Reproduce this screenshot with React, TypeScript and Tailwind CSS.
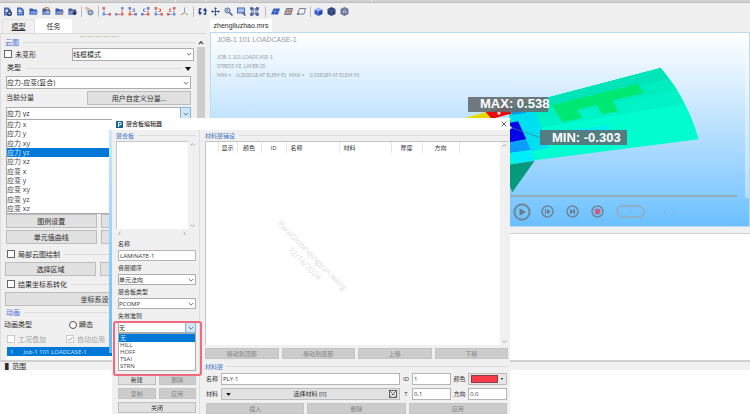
import React from "react";

const sans = "font-['Open_Sans','Noto_Sans_CJK_SC',sans-serif]";

function Chevron({ className = "" }: { className?: string }) {
  return (
    <svg viewBox="0 0 8 8" className={"pointer-events-none h-2 w-2 " + className} fill="none" stroke="#777" strokeWidth="1">
      <path d="M1.8 3 4 5.2 6.2 3" />
    </svg>
  );
}

function Select({ label, value, open = false, className = "" }: { label: string; value: string; open?: boolean; className?: string }) {
  return (
    <div className={"grid items-center border border-[#adadad] bg-white " + className}>
      <select aria-label={label} defaultValue={value} className="col-start-1 row-start-1 h-full w-full appearance-none bg-transparent leading-none outline-none">
        <option>{value}</option>
      </select>
      <span
        className={
          "pointer-events-none col-start-1 row-start-1 flex h-full w-[9px] items-center justify-center justify-self-end " +
          (open ? "bg-[#cfe6f8] outline outline-[#7fb4dc]" : "")
        }
      >
        <Chevron />
      </span>
    </div>
  );
}

function Button({ children, label, className = "" }: { children?: React.ReactNode; label?: string; className?: string }) {
  return (
    <button type="button" aria-label={label} className={"flex items-center justify-center whitespace-nowrap border border-[#bdbdbd] bg-[#e1e1e1] leading-none " + className}>
      {children}
    </button>
  );
}

function DialogButton({ children, disabled = false, className = "" }: { children: React.ReactNode; disabled?: boolean; className?: string }) {
  return (
    <button
      type="button"
      disabled={disabled}
      className={
        "flex flex-1 items-center justify-center whitespace-nowrap border leading-none " +
        (disabled ? "border-[#c4c4c4] bg-[#cccccc] text-[#868686] " : "border-[#bebebe] bg-[#e1e1e1] ") +
        className
      }
    >
      {children}
    </button>
  );
}

function Legend({ children, className = "" }: { children: React.ReactNode; className?: string }) {
  return (
    <div className={"flex items-center gap-1 whitespace-nowrap leading-none " + className}>
      {children}
      <span className="h-px flex-1 bg-[#dcdcdc]" />
    </div>
  );
}

function Check({ label, checked = false, muted = false }: { label: string; checked?: boolean; muted?: boolean }) {
  return (
    <label className={"flex items-center gap-[3px] whitespace-nowrap leading-none " + (muted ? "text-[#a3a3a3]" : "")}>
      <span className="grid h-[8px] w-[8px] place-items-center">
        <input
          type="checkbox"
          defaultChecked={checked}
          disabled={muted}
          className={"col-start-1 row-start-1 h-[8px] w-[8px] appearance-none border bg-white " + (muted ? "border-[#cccccc]" : "border-[#666666]")}
        />
        {checked && (
          <svg viewBox="0 0 8 8" className="col-start-1 row-start-1 h-[8px] w-[8px]" fill="none" stroke="#9a9a9a">
            <path d="m2 4 1.5 1.6L6.3 2.4" />
          </svg>
        )}
      </span>
      {label}
    </label>
  );
}

/* ---------- toolbar ---------- */

function Tool({ name, children }: { name: string; children: React.ReactNode }) {
  return (
    <button type="button" aria-label={name} className="flex w-[13px] items-center justify-center">
      <svg viewBox="0 0 18 18" className="h-[9px] w-[9px]" fill="none">
        {children}
      </svg>
    </button>
  );
}

const Sep = ({ className = "w-1" }: { className?: string }) => (
  <span className={"flex justify-center " + className}>
    <span className="h-[11px] w-px bg-[#bcbcbc]" />
  </span>
);

const Doc = () => (
  <>
    <path d="M2 1h9l5 5v11H2z" fill="#4668b8" />
    <path d="M5 5h5v3h3v2H5z" fill="#dbe6fa" />
    <path d="M5 12h7v2H5z" fill="#a9bfe8" />
  </>
);
const Folder = () => (
  <>
    <path d="M1 3h6l2 2h7v11H1z" fill="#3558ab" />
    <path d="M4 8h14l-3 8H1z" fill="#6f92dc" />
  </>
);

function Axes({ a, b, flip = false, up = false }: { a: string; b: string; flip?: boolean; up?: boolean }) {
  return (
    <g transform={flip ? "translate(18 0) scale(-1 1)" : undefined}>
      <path d="M4 3v12h11" stroke={a} strokeWidth="2" strokeDasharray="4 1" />
      <rect x="1" y="0" width="5" height="5" fill={b} />
      <rect x="1" y="12" width="5" height="5" fill={a} />
      <rect x="13" y="12" width="5" height="5" fill={b} />
      {up && <path d="M9 4h4v5H9" stroke={b} strokeWidth="2" />}
    </g>
  );
}

function Cube({ top, left, right }: { top: string; left: string; right: string }) {
  return (
    <>
      <path d="m9 1 8 4-8 4-8-4z" fill={top} />
      <path d="m1 5 8 4v9l-8-4z" fill={left} />
      <path d="m17 5-8 4v9l8-4z" fill={right} />
    </>
  );
}

function Toolbar() {
  return (
    <header className="flex h-[16px] shrink-0 items-center pl-px" role="toolbar">
      <Tool name="新建"><Doc /><circle cx="13" cy="13" r="5" fill="#26375f" /><path d="M13 10v6M10 13h6" stroke="#fff" /></Tool>
      <Tool name="文档"><Doc /><path d="m6 10 3 3 6-7" stroke="#6f92dc" strokeWidth="2" /></Tool>
      <Tool name="打开"><Folder /></Tool>
      <Tool name="导入"><Folder /><path d="M5 4c2-4 8-4 9 1" stroke="#d28a4c" strokeWidth="3" /><circle cx="11" cy="10" r="3" fill="#dfb18c" /></Tool>
      <Tool name="导出"><Folder /><path d="M11 8v8M8 13l3 3 3-3" stroke="#d28a4c" strokeWidth="2" /></Tool>
      <Tool name="保存"><Folder /><circle cx="13" cy="12" r="4" fill="#26375f" /><path d="M5 9h6" stroke="#d28a4c" strokeWidth="3" /></Tool>
      <Sep />
      <Tool name="设置"><circle cx="11" cy="11" r="6" fill="#8392ac" /><circle cx="11" cy="11" r="2" fill="#dce2ee" /><path d="m1 1 8 3" stroke="#e0a069" strokeWidth="3" /><path d="M2 5 6 9" stroke="#6f92dc" strokeWidth="2" /></Tool>
      <Sep />
      <Tool name="视图1"><Axes a="#6b8fe0" b="#e2664f" /></Tool>
      <Tool name="视图2"><Axes a="#e2664f" b="#6b8fe0" flip /></Tool>
      <Tool name="视图3"><Axes a="#e2664f" b="#5c82d8" up /></Tool>
      <Tool name="视图4"><Axes a="#e2664f" b="#5c82d8" flip up /></Tool>
      <Tool name="视图5"><Axes a="#6b8fe0" b="#e2664f" up /></Tool>
      <Tool name="视图6"><Axes a="#6b8fe0" b="#e2664f" flip up /></Tool>
      <Tool name="轴测"><path d="M9 1v10" stroke="#7d9ce0" strokeWidth="2" /><path d="m9 11-7 5" stroke="#e2664f" strokeWidth="2" /><path d="m9 11 7 5" stroke="#6fb98c" strokeWidth="2" /></Tool>
      <Sep className="w-[5px]" />
      <Tool name="旋转"><path d="M7 4H3v9M11 14h4V5" stroke="#2c4584" strokeWidth="3" /><path d="M0 10h8l-4 7zM10 8h8l-4-7z" fill="#2c4584" /></Tool>
      <Tool name="平移"><path d="M9 2v14M2 9h14" stroke="#3f5690" strokeWidth="2" /><path d="m9 0 3 4H6zM9 18l3-4H6zM0 9l4-3v6zM18 9l-4-3v6z" fill="#3f5690" /></Tool>
      <Tool name="缩放"><circle cx="7" cy="7" r="5" stroke="#3f5690" strokeWidth="2" /><path d="m11 11 6 6" stroke="#3f5690" strokeWidth="3" /><path d="M4 7h6M7 4v6" stroke="#3f5690" /></Tool>
      <Tool name="框选缩放"><rect x="1" y="2" width="14" height="10" fill="#a9bfe8" stroke="#4668b8" strokeWidth="2" /><path d="m11 11 6 6" stroke="#3f5690" strokeWidth="3" /></Tool>
      <Tool name="适应窗口"><rect x="2" y="2" width="14" height="14" fill="#7c8fb8" /><path d="M2 6V2h4M12 2h4v4M16 12v4h-4M6 16H2v-4" stroke="#3f5690" strokeWidth="3" /><path d="M9 3v12M3 9h12" stroke="#c9d2e6" strokeWidth="2" /></Tool>
      <Sep className="w-[8px]" />
      <Tool name="着色"><path d="M5 3h13l-4 12H0z" fill="#3558c8" /><path d="M5 9h10M9 4 6 15" stroke="#8fa8ea" /></Tool>
      <Tool name="网格"><path d="M5 3h12l-3 12H1z" fill="#d9a58c" stroke="#6b7596" strokeWidth="2" /><path d="M3 9h13M11 3 8 15" stroke="#6b7596" /></Tool>
      <Tool name="线框"><path d="M5 3h12l-3 11H1z" stroke="#77809a" strokeWidth="2" /><circle cx="2" cy="14" r="2" fill="#55617f" /></Tool>
      <Sep />
      <Tool name="实体"><Cube top="#9db8fa" left="#3e63d8" right="#2446ac" /></Tool>
      <Tool name="实体网格"><path d="m9 0 8 4v10l-8 4-8-4V4z" fill="#2f437a" /><path d="m3 5 6 3 6-3M9 8v8" stroke="#6f86be" /></Tool>
      <Tool name="体线框"><path d="m9 0 8 4v10l-8 4-8-4V4z" fill="#6a779a" /><circle cx="9" cy="9" r="4" fill="#b3bccf" /><path d="m3 5 6 3 6-3M9 8v8" stroke="#55617f" /></Tool>
    </header>
  );
}

/* ---------- left panel ---------- */

const components = ["应力 x", "应力 y", "应力 xy", "应力 yz", "应力 xz", "应变 x", "应变 y", "应变 xy", "应变 yz", "应变 xz"];

function TaskPanel() {
  return (
    <aside className="flex w-[210px] shrink-0 flex-col pr-[5px] text-[7px]">
      <nav className="flex h-[14px] shrink-0 pl-[2px]">
        <button type="button" className="w-[33px] border-x border-t border-[#e2e2e2] leading-none underline">模型</button>
        <button type="button" className="w-[37px] bg-white leading-none">任务</button>
      </nav>
      <div className="flex border-t border-[#d9d9d9]">
        <div className="flex min-w-0 flex-1 flex-col border-l border-[#dedede] pl-px">
          <div className="flex h-[4px] items-center justify-center">
            <span className="w-[39px] border-t border-dotted border-[#b5b59a]" />
          </div>
          <Legend className="h-[9px] pl-[3px] text-[#4169d8]">云图</Legend>
          <div className="flex h-[14px] items-center justify-between pl-[2px] pr-[2px]">
            <Check label="未变形" />
            <Select label="显示模式" value="线框模式" className="h-[13px] w-[122px]" />
          </div>
          <div className="flex h-[15px] items-center gap-1 pl-[5px] pr-[5px]">
            类型<span className="h-px flex-1 bg-[#dcdcdc]" />
            <svg viewBox="0 0 6 4" className="h-[4px] w-[6px]"><path d="M0 0h6L3 4z" fill="#111" /></svg>
          </div>
          <div className="flex flex-col gap-[2px] pl-[4px] pr-[5px]">
            <Select label="类型" value="应力-应变(复合)" className="h-[13px]" />
            <div className="flex h-[14px] items-center justify-between">
              <span>当前分量</span>
              <Button className="h-[14px] w-[104px]">用户自定义分量...</Button>
            </div>
            <Select label="当前分量" value="应力 yz" open className="h-[13px]" />
          </div>
          <ul role="listbox" aria-label="分量" className="ml-[4px] mr-[5px] grid h-[94px] auto-rows-fr border border-t-0 border-[#aaaaaa] bg-white leading-none text-[#444]">
            {components.map((c) => (
              <li
                key={c}
                role="option"
                aria-selected={c === "应力 yz"}
                className={"flex items-center " + (c === "应力 yz" ? "bg-[#0078d7] text-[#cfe6fa]" : "")}
              >
                {c}
              </li>
            ))}
          </ul>
          <div className="grid grid-cols-2 gap-x-1 gap-y-[2px] pb-[3px] pl-[4px] pr-[5px]">
            <Button className="h-[14px]">图例设置</Button>
            <Button className="h-[14px]" label="显示设置" />
            <Button className="h-[14px]">单元值曲线</Button>
            <Button className="h-[14px]" label="节点值曲线" />
          </div>
          <Legend className="h-[14px] pl-[5px]"><Check label="局部云图绘制" /></Legend>
          <div className="grid grid-cols-2 gap-x-1 pl-[3px] pr-[5px] pt-px">
            <Button className="h-[14px]">选择区域</Button>
            <Button className="h-[14px]" label="清除区域" />
          </div>
          <Legend className="h-[16px] pl-[5px]"><Check label="结果坐标系转化" /></Legend>
          <Button className="ml-[3px] mr-[5px] h-[14px]">坐标系设置</Button>
          <Legend className="h-[12px] pl-[4px] text-[#4169d8]">动画</Legend>
          <div className="flex h-[13px] items-center pl-[2px] leading-none">
            <span className="w-[65px]">动画类型</span>
            <label className="flex items-center gap-[2px]">
              <input type="radio" name="anim" className="h-[8px] w-[8px] appearance-none rounded-full border border-[#555555] bg-white" />
              瞬态
            </label>
          </div>
          <div className="flex h-[16px] items-center gap-[20px] pl-[5px]">
            <Check label="工况叠加" muted />
            <Check label="自动应用" checked muted />
          </div>
          <ul className="ml-[5px] mr-[5px] h-[13px] bg-white">
            <li className="flex h-[9px] items-center gap-[10px] bg-[#0078d7] pl-[3px] text-[6px] leading-none text-[#cfe6fa]">
              <span>1</span><span>Job-1 101 LOADCASE-1</span>
            </li>
          </ul>
        </div>
        <div className="flex w-[9px] shrink-0 flex-col items-center bg-[#f0f0f0]">
          <svg viewBox="0 0 8 8" className="mt-[4px] h-[9px] w-[8px]" fill="none" stroke="#555"><path d="M2 5.5 4 3.2 6 5.5" strokeWidth="1.4" /></svg>
          <span className="h-[180px] w-[8px] bg-[#cdcdcd]" />
        </div>
      </div>
    </aside>
  );
}

/* ---------- result viewport ---------- */

function Wing() {
  return (
    <svg viewBox="0 6 900 585" className="absolute left-[238px] top-0 h-[195px] w-[300px]">
      <path d="M180 230 635 111Q716 206 749 325L257 388 180 400Z" fill="#00fccf" />
      <path d="M200 225 635 111Q680 165 706 218L275 290Z" fill="#00f2c6" />
      <path d="M200 225 635 111 685 177 275 262Z" fill="#00edc0" />
      <path d="M200 225 635 111 660 143 310 222 262 240Z" fill="#00e4b7" />
      <path d="M308 222 567 159 585 187 490 208 508 240 460 250 442 222 384 236 400 261 340 273Z" fill="#00e871" />
      <path d="M180 248 256 238 300 352 245 360Z" fill="#00dff2" />
      <path d="M360 296 480 284V298L360 312Z" fill="#00edf2" />
      <path d="M182 232 222 226 232 246 190 251Z" fill="#079be8" />
      <path d="M30 266 112 243 130 264V270H30Z" fill="#e6d900" />
      <path d="M110 243 176 226 188 248 128 264Z" fill="#e80b0b" />
      <path d="M178 260 192 273 178 275Z" fill="#00dca9" />
      <path d="M178 276 207 271 232 325 178 335Z" fill="#0505ea" />
      <path d="M178 336 232 326 245 357 178 367Z" fill="#0b9dfb" />
      <path d="M182 367 245 357 257 388 194 398Z" fill="#00eefc" />
      <path d="M178 367 186 366 196 398 178 400Z" fill="#00f7cb" />
      <path d="M178 401 257 389 190 484 178 455Z" fill="#059a7c" />
      <path d="M185 289 275 320" stroke="#4f7890" strokeWidth="2" />
      <circle cx="150" cy="246" r="5" fill="#f3dede" />
      <circle cx="183" cy="290" r="5" fill="#dcdce8" />
    </svg>
  );
}

function PlayerButton({ name, children, className = "h-[13px] w-[13px]" }: { name: string; children: React.ReactNode; className?: string }) {
  return (
    <button type="button" aria-label={name} className={className}>
      <svg viewBox="0 0 26 26" className="h-full w-full" fill="none">
        <circle cx="13" cy="13" r="11" stroke="#6f8797" strokeWidth="3" />
        {children}
      </svg>
    </button>
  );
}

function Viewport() {
  return (
    <section className="relative flex h-[195px] flex-col border border-[#b9d9f7] bg-linear-to-b from-white via-[#b9e0fe] to-[#69c0ff] pl-[6px] font-['Lato',sans-serif] text-[#979b9e]">
      <p className="pt-px font-['Liberation_Sans',sans-serif] text-[7px] leading-[11px]">JOB-1 101 LOADCASE-1</p>
      <div className="whitespace-pre pt-[8px] text-[5px] leading-[9px]">
        <p>JOB-1 101 LOADCASE-1</p>
        <p>STRESS YZ, LAYER (3)</p>
        <p>{"MIN =   -0.303018 AT ELEM 91  MAX =    0.538189 AT ELEM 95"}</p>
      </div>
      <Wing />
      <span className="absolute left-[257px] top-[64px] h-[15px] w-[80px] whitespace-nowrap bg-[#646c70]/90 pl-[12px] font-['Liberation_Sans',sans-serif] text-[13px] font-bold leading-[14px] text-white">MAX: 0.538</span>
      <span className="absolute left-[329px] top-[97px] h-[15px] w-[87px] whitespace-nowrap bg-[#5c7078]/90 pl-[12px] font-['Liberation_Sans',sans-serif] text-[13px] font-bold leading-[15px] text-white">MIN: -0.303</span>
      <span className="absolute right-0 top-[14px] h-[151px] w-[4px] bg-white/40" />
      <div className="mt-auto pr-[12px]">
        <div className="h-[2px] bg-[#94acba]" />
        <div className="flex h-[29px] items-center gap-[12px] pl-[296px]">
          <PlayerButton name="播放" className="-mr-[2px] h-[18px] w-[18px]"><path d="M9.500 7.500v11l9-5.500z" fill="#6f7880" /></PlayerButton>
          <PlayerButton name="下一帧"><path d="M8 8h2v10H8zM12 7.500v11l7-5.500z" fill="#6f7880" /></PlayerButton>
          <PlayerButton name="末帧"><path d="M8 7.500v11l7-5.500zM15 8h3v10h-3z" fill="#6f7880" /></PlayerButton>
          <PlayerButton name="录制"><circle cx="13" cy="13" r="6" fill="#cf5c86" /></PlayerButton>
          <button type="button" className="h-[13px] w-[29px] rounded-full border-2 border-[#8fb0c8] text-[5px] leading-none text-[#8fb0c8]">x1</button>
          <span className="pl-[6px] text-[6px] text-[#8fb0c8]">1 / 1</span>
        </div>
      </div>
    </section>
  );
}

/* ---------- laminate editor ---------- */

const headers: [string, string][] = [
  ["", "w-[12px]"],
  ["显示", "w-[19px] text-center"],
  ["颜色", "w-[24px] text-center"],
  ["ID", "w-[25px] text-center"],
  ["名称", "w-[53px] pl-[4px] text-left"],
  ["材料", "w-[52px] pl-[4px] text-left"],
  ["厚度", "w-[31px] text-center"],
  ["方向", "w-[37px] text-center"],
];

const field = "h-[12px] min-w-0 border border-[#b4b4b4] bg-white px-px leading-none outline-none";

function ScrollArrow({ d }: { d: string }) {
  return (
    <svg viewBox="0 0 8 8" className="h-[7px] w-[7px]" fill="none" stroke="#9a9a9a"><path d={d} /></svg>
  );
}

function LaminateColumn() {
  return (
    <div className="flex w-[88px] shrink-0 flex-col border-r border-[#dedede] pl-[4px] pr-[3px]">
      <Legend className="h-[11px] text-[#3f74c8]">层合板</Legend>
      <div className="grid grid-cols-[1fr_8px] grid-rows-[88px_8px]">
        <div className="border-l border-t border-[#c9c9c9] bg-white" />
        <div className="flex flex-col items-center justify-between">
          <ScrollArrow d="M2 5 4 3l2 2" /><ScrollArrow d="m2 3 2 2 2-2" />
        </div>
        <div className="flex items-center justify-between">
          <ScrollArrow d="M5 2 3 4l2 2" /><ScrollArrow d="m3 2 2 2-2 2" />
        </div>
      </div>
      <div className="flex flex-col pl-[2px] pt-px">
        <label htmlFor="lam-name" className="flex h-[12px] items-center">名称</label>
        <input id="lam-name" defaultValue="LAMINATE-1" className="h-[11px] w-full border border-[#b4b4b4] bg-white px-px leading-none" />
        <span className="flex h-[13px] items-center pt-px">叠层顺序</span>
        <Select label="叠层顺序" value="单元法向" className="h-[11px]" />
        <span className="flex h-[13px] items-center pt-px">层合板类型</span>
        <Select label="层合板类型" value="PCOMP" className="h-[11px]" />
        <span className="flex h-[13px] items-center pt-px">失效准则</span>
        <div className="relative h-[50px]">
          <Select label="失效准则" value="无" open className="h-[11px]" />
          <ul role="listbox" aria-label="失效准则选项" className="border border-[#aaaaaa] bg-white leading-[8px] text-[#444]">
            <li role="option" aria-selected="true" className="h-[8px] bg-[#0078d7] pl-px text-[#cfe6fa]">无</li>
            {["HILL", "HOFF", "TSAI", "STRN"].map((c) => (
              <li key={c} role="option" aria-selected="false" className="h-[7px] pl-px leading-[7px]">{c}</li>
            ))}
          </ul>
          <span className="pointer-events-none absolute -bottom-[4px] -left-[5px] -right-[6px] -top-px rounded-[3px] border-2 border-[#f0697c]" />
        </div>
      </div>
      <div className="flex flex-col gap-[3px] pl-[2px] pt-[2px]">
        <div className="flex h-[11px] gap-[3px]"><DialogButton>新建</DialogButton><DialogButton disabled>删除</DialogButton></div>
        <div className="flex h-[11px] gap-[3px]"><DialogButton disabled>复制</DialogButton><DialogButton disabled>应用</DialogButton></div>
        <div className="flex h-[11px]"><DialogButton>关闭</DialogButton></div>
      </div>
    </div>
  );
}

function PlyColumn() {
  return (
    <div className="flex min-w-0 flex-1 flex-col pl-[5px] pr-[2px]">
      <Legend className="h-[11px] text-[#3f74c8]">材料层铺设</Legend>
      <div className="flex h-[204px] border-l border-t border-[#c4c4c4]">
        <div className="relative min-w-0 flex-1 overflow-hidden bg-white">
          <table className="table-fixed border-collapse">
            <thead>
              <tr className="h-[11px]">
                {headers.map(([h, cls]) => (
                  <th key={cls} className={"border-r border-[#e6e6e6] p-0 font-normal leading-none " + cls}>{h}</th>
                ))}
              </tr>
            </thead>
          </table>
          <p className="absolute left-[53px] top-[106px] w-[100px] rotate-45 whitespace-nowrap text-center text-[8px] leading-[11px] text-[#dedede]">
            ParaGlobe\qingyun.wang<br />12/16/2024
          </p>
        </div>
        <div className="flex w-[8px] flex-col items-center justify-between">
          <ScrollArrow d="M2 5 4 3l2 2" /><ScrollArrow d="m2 3 2 2 2-2" />
        </div>
      </div>
      <div className="flex h-[14px] gap-[3px] pt-[3px]">
        <DialogButton disabled>移动到顶部</DialogButton>
        <DialogButton disabled>移动到底部</DialogButton>
        <DialogButton disabled>上移</DialogButton>
        <DialogButton disabled>下移</DialogButton>
      </div>
      <Legend className="mt-[2px] h-[11px] text-[#3f74c8]">材料层</Legend>
      <div className="grid grid-cols-[15px_1fr_12px_39px_17px_39px] items-center gap-y-[3px] pl-px pr-px pt-px">
        <label htmlFor="ply-name">名称</label>
        <input id="ply-name" defaultValue="PLY-1" className={field} />
        <label htmlFor="ply-id" className="text-center">ID</label>
        <input id="ply-id" defaultValue="1" className={field} />
        <span className="text-center">颜色</span>
        <button type="button" aria-label="颜色" className="flex h-[12px] items-center justify-between border border-[#bcbcbc] bg-[#e6e6e6] pl-[2px] pr-[2px]">
          <span className="h-[8px] w-[27px] border border-[#8b3a44] bg-[#fb3b4a]" />
          <svg viewBox="0 0 4 3" className="h-[2px] w-[4px]"><path d="M0 0h4L2 3z" fill="#333" /></svg>
        </button>
        <span>材料</span>
        <button type="button" className="flex h-[12px] items-center justify-between border border-[#bcbcbc] bg-[#e1e1e1] pl-[4px] pr-[2px] leading-none">
          <svg viewBox="0 0 6 4" className="h-[3px] w-[5px]"><path d="M0 0h6L3 4z" fill="#111" /></svg>
          选择材料 [0]
          <svg viewBox="0 0 16 16" className="h-[8px] w-[8px]" fill="none" stroke="#333" strokeWidth="1.500"><rect x="1" y="1" width="14" height="14" /><path d="m3 3 10 10M13 3 3 13" strokeDasharray="4 2" /></svg>
        </button>
        <label htmlFor="ply-t" className="text-center">T</label>
        <input id="ply-t" defaultValue="0.1" className={field} />
        <label htmlFor="ply-dir" className="text-center">方向</label>
        <input id="ply-dir" defaultValue="0.0" className={field} />
      </div>
      <div className="flex h-[14px] gap-[3px] pl-px pr-px pt-[3px]">
        <DialogButton disabled>插入</DialogButton>
        <DialogButton disabled>删除</DialogButton>
        <DialogButton disabled>应用</DialogButton>
      </div>
    </div>
  );
}

function LaminateDialog() {
  return (
    <div role="dialog" aria-label="层合板编辑器" className="absolute left-[112px] top-[118px] w-[398px] bg-[#f0f0f0] text-[6px] leading-none text-[#333]">
      <span className="absolute -left-[3px] bottom-[61px] top-[12px] w-[3px] bg-linear-to-b from-[#c9e9ff] to-[#62b9f8]" />
      <div className="flex h-[12px] items-center gap-[3px] bg-white pl-[4px] pr-[3px] text-black">
        <svg viewBox="0 0 14 14" className="h-[7px] w-[7px]"><rect width="14" height="14" rx="1" fill="#14629c" /><path d="M5 12V3h3a2.500 2.500 0 0 1 0 5H5" fill="none" stroke="#fff" strokeWidth="2" /></svg>
        <span className="flex-1">层合板编辑器</span>
        <button type="button" aria-label="关闭窗口">
          <svg viewBox="0 0 10 10" className="h-[6px] w-[6px]" fill="none" stroke="#333" strokeWidth="1.300"><path d="m1 1 8 8M9 1 1 9" /></svg>
        </button>
      </div>
      <div className="flex">
        <LaminateColumn />
        <PlyColumn />
      </div>
    </div>
  );
}

export default function App() {
  return (
    <main className={"relative flex h-screen flex-col overflow-hidden bg-white text-[#2b2b2b] " + sans}>
      <div className="flex h-[370px] shrink-0 flex-col bg-[#f0f0f0]">
        <div className="flex h-[3px] shrink-0 gap-px border-b border-[#bdbdbd] bg-[#eeeeee]">
          <span className="w-[175px] bg-[#d2d2d2]" />
          <span className="w-[29px] bg-[#d2d2d2]" />
          <span className="w-[165px] bg-[#d2d2d2]" />
          <span className="flex-1 bg-[#d2d2d2]" />
        </div>
        <Toolbar />
        <div className="flex min-h-0">
          <TaskPanel />
          <div className="flex min-w-0 flex-1 flex-col">
            <div className="flex h-[13px] shrink-0">
              <span className="flex w-[62px] items-center justify-center bg-white font-['Liberation_Sans',sans-serif] text-[7px] leading-none">zhengliuzhao.mrs</span>
            </div>
            <Viewport />
            <div className="mt-[6px] flex-1 border-t border-[#d0d0d0] bg-white" />
          </div>
        </div>
        <div className="min-h-0 flex-1 overflow-hidden border-t-2 border-[#cfcfcf] pl-[5px] text-[7px] leading-[10px]">▌范围</div>
      </div>
      <LaminateDialog />
    </main>
  );
}
